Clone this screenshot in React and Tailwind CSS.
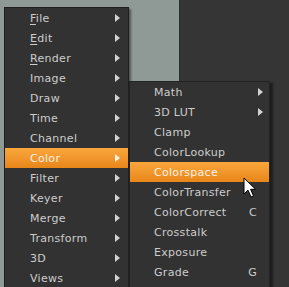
import React from "react";

const mainItems = [
  { label: "File", u: true },
  { label: "Edit", u: true },
  { label: "Render", u: true },
  { label: "Image" },
  { label: "Draw" },
  { label: "Time" },
  { label: "Channel" },
  { label: "Color", active: true },
  { label: "Filter" },
  { label: "Keyer" },
  { label: "Merge" },
  { label: "Transform" },
  { label: "3D" },
  { label: "Views" },
];

const subItems = [
  { label: "Math", arrow: true },
  { label: "3D LUT", arrow: true },
  { label: "Clamp" },
  { label: "ColorLookup" },
  { label: "Colorspace", active: true },
  { label: "ColorTransfer" },
  { label: "ColorCorrect", key: "C" },
  { label: "Crosstalk" },
  { label: "Exposure" },
  { label: "Grade", key: "G" },
];

function Arrow({ active }) {
  return (
    <svg width="5" height="8" viewBox="0 0 5 8" className="shrink-0">
      <path d="M0 0 L5 4 L0 8 Z" fill={active ? "#fff4e6" : "#d2d2d2"} />
    </svg>
  );
}

function Label({ label, u }) {
  if (!u) return <span>{label}</span>;
  return (
    <span>
      <span className="underline underline-offset-2">{label[0]}</span>
      {label.slice(1)}
    </span>
  );
}

export default function App() {
  return (
    <div
      className="relative w-[289px] h-[287px] overflow-hidden flex bg-[#353535] text-[11px] leading-none tracking-[0.3px]"
      style={{ fontFamily: '"DejaVu Sans", Verdana, sans-serif' }}
    >
      <div className="w-[180px] h-full bg-[#8f9a96] border-r border-[#26302c]" />
      <div className="flex-1 h-full bg-[#353535]" />

      {/* main menu */}
      <div className="absolute left-[4px] top-[7px] w-[125px] h-[300px] border border-[#1f1f1f] bg-[#323232] shadow-[2px_2px_2px_rgba(0,0,0,0.45)]">
        {mainItems.map((it) => (
          <div
            key={it.label}
            className={
              "h-[20px] flex items-center justify-between pl-[25px] pr-[8px] " +
              (it.active
                ? "bg-gradient-to-b from-[#f9a73c] to-[#e88618] text-[#fbf1e6]"
                : "text-[#cdcdcd]")
            }
          >
            <Label label={it.label} u={it.u} />
            <Arrow active={it.active} />
          </div>
        ))}
      </div>

      {/* submenu */}
      <div className="absolute left-[129px] top-[81px] w-[141px] h-[220px] border border-[#222222] bg-[#323232] shadow-[3px_2px_2px_rgba(0,0,0,0.45)]">
        {subItems.map((it) => (
          <div
            key={it.label}
            className={
              "h-[20px] flex items-center justify-between pl-[24px] " +
              (it.key ? "pr-[12px] " : "pr-[6px] ") +
              (it.active
                ? "bg-gradient-to-b from-[#f9a73c] to-[#e88618] text-[#fbf1e6]"
                : "text-[#cdcdcd]")
            }
          >
            <span>{it.label}</span>
            {it.arrow && <Arrow />}
            {it.key && <span>{it.key}</span>}
          </div>
        ))}
      </div>

      {/* mouse cursor */}
      <svg
        className="absolute left-[243px] top-[177px]"
        width="14"
        height="22"
        viewBox="0 0 14 22"
      >
        <path
          d="M1 1 L1 17 L5 13.2 L8 20 L10.5 19 L7.6 12.3 L12.6 12.3 Z"
          fill="#ffffff"
          stroke="#000000"
          strokeWidth="1"
          strokeLinejoin="miter"
        />
      </svg>
    </div>
  );
}
